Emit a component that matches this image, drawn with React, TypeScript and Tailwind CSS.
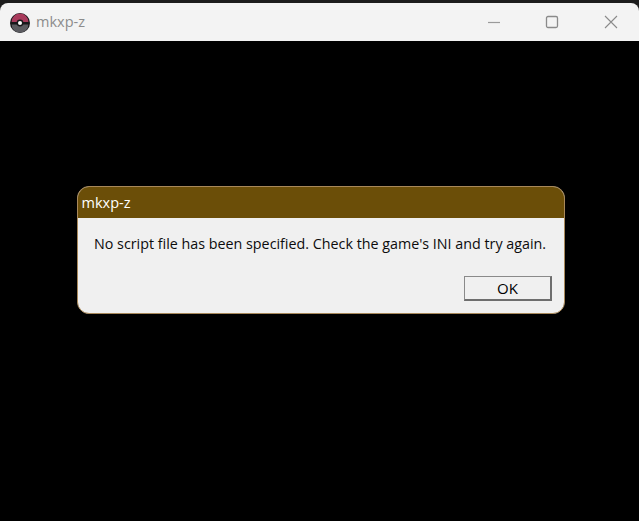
const uiFont = "font-['Open_Sans',sans-serif]";

function TitleBar() {
  return (
    <div className="flex h-[38px] shrink-0 items-center rounded-t-[8px] bg-[#f3f3f3]">
      <svg className="ml-[10px] mt-[1px] h-[20px] w-[20px]" viewBox="0 0 20 20">
        <circle cx="10" cy="10" r="10" fill="#17171a" />
        <path d="M1.6 9 A8.4 8.4 0 0 1 18.4 9 Z" fill="#a83a5c" />
        <path d="M1.6 11.4 A8.4 8.4 0 0 0 18.4 11.4 Z" fill="#5b5b60" />
        <circle cx="10" cy="10" r="3.4" fill="#17171a" />
        <circle cx="10" cy="10" r="2" fill="#ffffff" />
      </svg>
      <span className={`ml-[6px] text-[14.5px] leading-none text-[#8c8c8c] ${uiFont}`}>mkxp-z</span>
      <div className="ml-auto flex items-center">
        <svg className="h-[14px] w-[14px]" viewBox="0 0 14 14">
          <path d="M1 7.5H13" stroke="#9a9a9a" strokeWidth="1.2" fill="none" />
        </svg>
        <svg className="ml-[44px] h-[14px] w-[14px]" viewBox="0 0 14 14">
          <rect x="1.5" y="1.5" width="11" height="11" rx="1.5" stroke="#8a8a8a" strokeWidth="1.3" fill="none" />
        </svg>
        <svg className="ml-[45px] mr-[21px] h-[14px] w-[14px]" viewBox="0 0 14 14">
          <path d="M1 1L13 13M13 1L1 13" stroke="#8a8a8a" strokeWidth="1.1" fill="none" />
        </svg>
      </div>
    </div>
  );
}

function MessageBox() {
  return (
    <div className={`flex h-[128px] w-[488px] flex-col overflow-hidden rounded-[12px] border border-[#a8885a] bg-[#f0f0f0] ${uiFont}`}>
      <div className="-mx-px -mt-px flex h-[32px] shrink-0 items-center bg-[#6b4e08] pl-[4.5px] pt-[1px] text-[14.5px] text-white">
        mkxp-z
      </div>
      <p className="mt-[16px] whitespace-nowrap pl-[16px] text-[14.3px] leading-[20px] text-[#0c0c0c]">
        No script file has been specified. Check the game's INI and try again.
      </p>
      <div className="mt-[22px] flex justify-end pr-[12px]">
        <button className="h-[25px] w-[88px] border border-r-2 border-b-2 border-t-[#8a8a8a] border-l-[#8a8a8a] border-r-[#6e6e6e] border-b-[#6e6e6e] bg-[#f0f0f0] text-[15px] leading-none text-black">
          OK
        </button>
      </div>
    </div>
  );
}

export default function App() {
  return (
    <div className="flex h-[521px] w-[639px] flex-col overflow-hidden bg-[#1c1c1c] pt-[3px]">
      <TitleBar />
      <main className="flex-1 bg-black pl-[77px] pt-[145px]">
        <MessageBox />
      </main>
    </div>
  );
}
